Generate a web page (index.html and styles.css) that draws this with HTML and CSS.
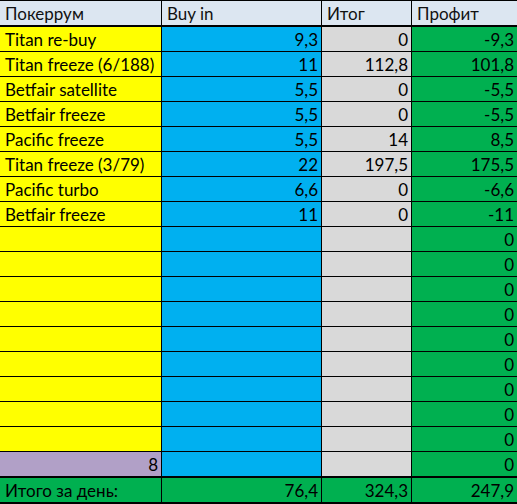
FILE: index.html
```html
<!DOCTYPE html>
<html>
<head>
<meta charset="utf-8">
<link rel="stylesheet" href="styles.css">
</head>
<body>
<div class="sheet">
  <div class="row head">
    <div class="c c1">Покеррум</div>
    <div class="c c2">Buy in</div>
    <div class="c c3">Итог</div>
    <div class="c c4">Профит</div>
  </div>
  <div class="row"><div class="c c1 y">Titan re-buy</div><div class="c c2 b n">9,3</div><div class="c c3 g n">0</div><div class="c c4 gr n">-9,3</div></div>
  <div class="row"><div class="c c1 y">Titan freeze (6/188)</div><div class="c c2 b n">11</div><div class="c c3 g n">112,8</div><div class="c c4 gr n">101,8</div></div>
  <div class="row"><div class="c c1 y">Betfair satellite</div><div class="c c2 b n">5,5</div><div class="c c3 g n">0</div><div class="c c4 gr n">-5,5</div></div>
  <div class="row"><div class="c c1 y">Betfair freeze</div><div class="c c2 b n">5,5</div><div class="c c3 g n">0</div><div class="c c4 gr n">-5,5</div></div>
  <div class="row"><div class="c c1 y">Pacific freeze</div><div class="c c2 b n">5,5</div><div class="c c3 g n">14</div><div class="c c4 gr n">8,5</div></div>
  <div class="row"><div class="c c1 y">Titan freeze (3/79)</div><div class="c c2 b n">22</div><div class="c c3 g n">197,5</div><div class="c c4 gr n">175,5</div></div>
  <div class="row"><div class="c c1 y">Pacific turbo</div><div class="c c2 b n">6,6</div><div class="c c3 g n">0</div><div class="c c4 gr n">-6,6</div></div>
  <div class="row"><div class="c c1 y">Betfair freeze</div><div class="c c2 b n">11</div><div class="c c3 g n">0</div><div class="c c4 gr n">-11</div></div>
  <div class="row"><div class="c c1 y"></div><div class="c c2 b"></div><div class="c c3 g"></div><div class="c c4 gr n">0</div></div>
  <div class="row"><div class="c c1 y"></div><div class="c c2 b"></div><div class="c c3 g"></div><div class="c c4 gr n">0</div></div>
  <div class="row"><div class="c c1 y"></div><div class="c c2 b"></div><div class="c c3 g"></div><div class="c c4 gr n">0</div></div>
  <div class="row"><div class="c c1 y"></div><div class="c c2 b"></div><div class="c c3 g"></div><div class="c c4 gr n">0</div></div>
  <div class="row"><div class="c c1 y"></div><div class="c c2 b"></div><div class="c c3 g"></div><div class="c c4 gr n">0</div></div>
  <div class="row"><div class="c c1 y"></div><div class="c c2 b"></div><div class="c c3 g"></div><div class="c c4 gr n">0</div></div>
  <div class="row"><div class="c c1 y"></div><div class="c c2 b"></div><div class="c c3 g"></div><div class="c c4 gr n">0</div></div>
  <div class="row"><div class="c c1 y"></div><div class="c c2 b"></div><div class="c c3 g"></div><div class="c c4 gr n">0</div></div>
  <div class="row"><div class="c c1 y"></div><div class="c c2 b"></div><div class="c c3 g"></div><div class="c c4 gr n">0</div></div>
  <div class="row last"><div class="c c1 p n">8</div><div class="c c2 b"></div><div class="c c3 g"></div><div class="c c4 gr n">0</div></div>
  <div class="row total"><div class="c c1 gr">Итого за день:</div><div class="c c2 gr n">76,4</div><div class="c c3 gr n">324,3</div><div class="c c4 gr n">247,9</div></div>
</div>
</body>
</html>
```
FILE: styles.css
```css
html, body {
  margin: 0;
  padding: 0;
  background: #ffffff;
}
.sheet {
  width: 517px;
  border-top: 1px solid #000;
  font-family: Lato, "Open Sans", sans-serif;
  font-size: 17px;
  color: #000;
}
.row {
  display: flex;
  height: 25px;
  box-sizing: border-box;
  border-bottom: 1px solid #000;
}
.row.head {
  height: 26px;
  border-bottom: 2px solid #000;
  background: #dce6f1;
  color: #111;
}
.row.last {
  height: 26px;
  border-bottom: 2px solid #000;
}
.row.total {
  height: 26px;
  border-bottom: 2px solid #000;
}
.c {
  box-sizing: border-box;
  border-right: 1px solid #000;
  padding: 1px 4px 0 5px;
  display: flex;
  align-items: center;
  white-space: nowrap;
  overflow: hidden;
}
.c1 { width: 162px; }
.c2 { width: 160px; }
.c3 { width: 90px; }
.c4 { flex: 1; border-right: none; }
.n { justify-content: flex-end; padding-right: 3px; }
.y { background: #ffff00; }
.b { background: #00b0f0; }
.g { background: #d9d9d9; }
.gr { background: #00b050; }
.p { background: #b1a0c7; }
```
